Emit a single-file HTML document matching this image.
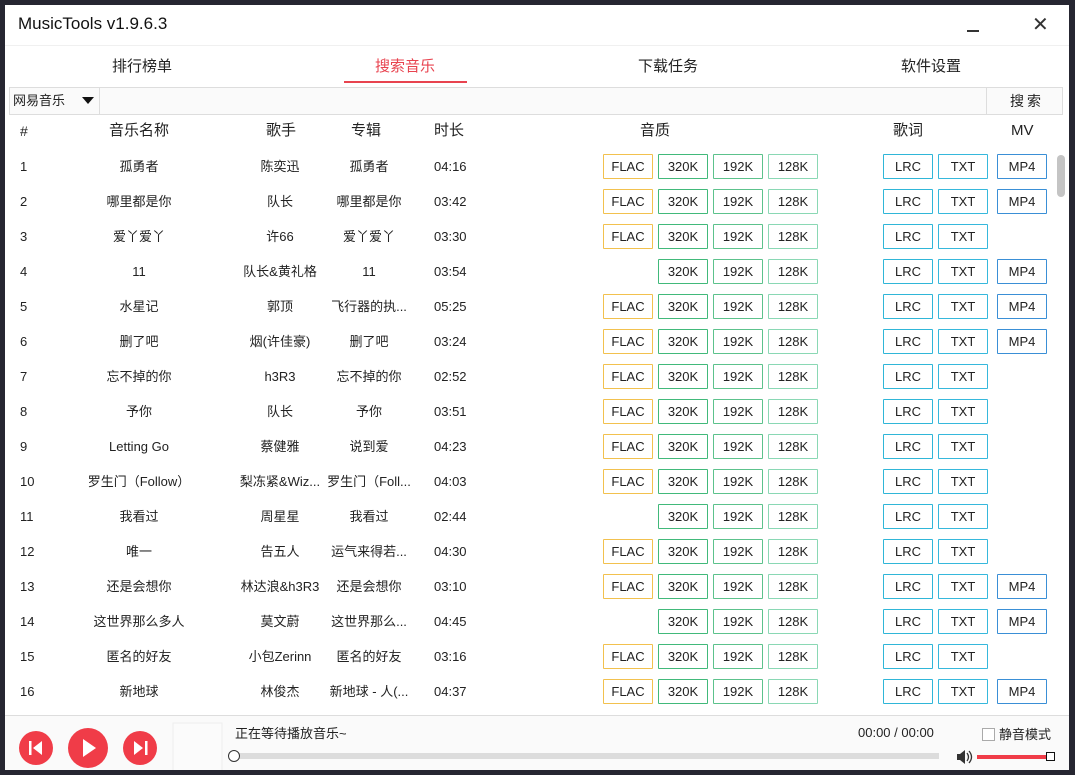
<!DOCTYPE html>
<html><head><meta charset="utf-8">
<style>
*{box-sizing:border-box;margin:0;padding:0}
body{width:1075px;height:775px;background:#262631;position:relative;overflow:hidden;font-family:"Liberation Sans","Noto Sans CJK SC",sans-serif;color:#222}
#win{position:absolute;left:5px;top:5px;width:1064px;height:765px;background:#fff;overflow:hidden}
.abs{position:absolute;line-height:20px}
#title{left:13px;top:9px;font-size:17px;color:#111}
.tab{top:52px;font-size:15px;width:160px;text-align:center;color:#222}
#sb{left:4px;top:82px;width:1054px;height:28px;border:1px solid #ddd;background:#fafafa}
#list{left:0;top:140px;width:1064px;height:570px;overflow:hidden}
.r{position:absolute;left:0;width:1050px;height:35px;font-size:13px;color:#222}
.r span{position:absolute;top:0;height:35px;line-height:35px;white-space:nowrap}
.c1{left:15px}
.c2{left:54px;width:160px;text-align:center}
.c3{left:230px;width:90px;text-align:center}
.c4{left:318px;width:92px;text-align:center}
.c5{left:429px}
.r i{position:absolute;top:5px;width:50px;height:25px;border:1px solid;font-style:normal;font-size:13px;text-align:center;line-height:23px;border-radius:1px;color:#222}
.f{left:598px;border-color:#f2c14e!important}
.k3{left:653px;border-color:#41b97a!important}
.k1{left:708px;border-color:#5cc28c!important}
.k2{left:763px;border-color:#8ad8b4!important}
.l{left:878px;border-color:#2fb6d8!important}
.t{left:933px;border-color:#36b8dc!important}
.m{left:992px;border-color:#3a8fd6!important}
.hd{position:absolute;top:116px;height:20px;line-height:20px;font-size:15px;color:#222}
</style></head><body>
<div id="win">
<div class="abs" id="title">MusicTools v1.9.6.3</div>
<div class="abs" style="left:962px;top:25px;width:12px;height:2px;background:#333"></div>
<div class="abs" style="left:1027px;top:10px;font-size:20px;color:#333">✕</div>
<div class="abs" style="left:0;top:40px;width:1064px;height:1px;background:#f0f0f0"></div>
<div class="abs tab" style="left:57px">排行榜单</div>
<div class="abs tab" style="left:320px;color:#e8434f">搜索音乐</div>
<div class="abs" style="left:339px;top:76px;width:123px;height:2px;background:#e8434f"></div>
<div class="abs tab" style="left:583px">下载任务</div>
<div class="abs tab" style="left:846px">软件设置</div>
<div class="abs" id="sb"></div>
<div class="abs" style="left:8px;top:86px;font-size:13px">网易音乐</div>
<div class="abs" style="left:77px;top:92px;width:0;height:0;border-left:6px solid transparent;border-right:6px solid transparent;border-top:7px solid #111"></div>
<div class="abs" style="left:94px;top:82px;width:1px;height:28px;background:#ddd"></div>
<div class="abs" style="left:981px;top:82px;width:1px;height:28px;background:#ddd"></div>
<div class="abs" style="left:1005px;top:86px;font-size:14px;letter-spacing:3px">搜索</div>
<div class="hd" style="left:15px;font-size:14px">#</div>
<div class="hd" style="left:104px">音乐名称</div>
<div class="hd" style="left:261px">歌手</div>
<div class="hd" style="left:346px">专辑</div>
<div class="hd" style="left:429px">时长</div>
<div class="hd" style="left:635px">音质</div>
<div class="hd" style="left:888px">歌词</div>
<div class="hd" style="left:1006px">MV</div>
<div class="abs" style="left:1052px;top:150px;width:8px;height:42px;border-radius:4px;background:#c4c4c4"></div>
<div class="abs" id="list">
<div class="r" style="top:4px"><span class="c1">1</span><span class="c2">孤勇者</span><span class="c3">陈奕迅</span><span class="c4">孤勇者</span><span class="c5">04:16</span><i class="f">FLAC</i><i class="k3">320K</i><i class="k1">192K</i><i class="k2">128K</i><i class="l">LRC</i><i class="t">TXT</i><i class="m">MP4</i></div>
<div class="r" style="top:39px"><span class="c1">2</span><span class="c2">哪里都是你</span><span class="c3">队长</span><span class="c4">哪里都是你</span><span class="c5">03:42</span><i class="f">FLAC</i><i class="k3">320K</i><i class="k1">192K</i><i class="k2">128K</i><i class="l">LRC</i><i class="t">TXT</i><i class="m">MP4</i></div>
<div class="r" style="top:74px"><span class="c1">3</span><span class="c2">爱丫爱丫</span><span class="c3">许66</span><span class="c4">爱丫爱丫</span><span class="c5">03:30</span><i class="f">FLAC</i><i class="k3">320K</i><i class="k1">192K</i><i class="k2">128K</i><i class="l">LRC</i><i class="t">TXT</i></div>
<div class="r" style="top:109px"><span class="c1">4</span><span class="c2">11</span><span class="c3">队长&amp;黄礼格</span><span class="c4">11</span><span class="c5">03:54</span><i class="k3">320K</i><i class="k1">192K</i><i class="k2">128K</i><i class="l">LRC</i><i class="t">TXT</i><i class="m">MP4</i></div>
<div class="r" style="top:144px"><span class="c1">5</span><span class="c2">水星记</span><span class="c3">郭顶</span><span class="c4">飞行器的执...</span><span class="c5">05:25</span><i class="f">FLAC</i><i class="k3">320K</i><i class="k1">192K</i><i class="k2">128K</i><i class="l">LRC</i><i class="t">TXT</i><i class="m">MP4</i></div>
<div class="r" style="top:179px"><span class="c1">6</span><span class="c2">删了吧</span><span class="c3">烟(许佳豪)</span><span class="c4">删了吧</span><span class="c5">03:24</span><i class="f">FLAC</i><i class="k3">320K</i><i class="k1">192K</i><i class="k2">128K</i><i class="l">LRC</i><i class="t">TXT</i><i class="m">MP4</i></div>
<div class="r" style="top:214px"><span class="c1">7</span><span class="c2">忘不掉的你</span><span class="c3">h3R3</span><span class="c4">忘不掉的你</span><span class="c5">02:52</span><i class="f">FLAC</i><i class="k3">320K</i><i class="k1">192K</i><i class="k2">128K</i><i class="l">LRC</i><i class="t">TXT</i></div>
<div class="r" style="top:249px"><span class="c1">8</span><span class="c2">予你</span><span class="c3">队长</span><span class="c4">予你</span><span class="c5">03:51</span><i class="f">FLAC</i><i class="k3">320K</i><i class="k1">192K</i><i class="k2">128K</i><i class="l">LRC</i><i class="t">TXT</i></div>
<div class="r" style="top:284px"><span class="c1">9</span><span class="c2">Letting Go</span><span class="c3">蔡健雅</span><span class="c4">说到爱</span><span class="c5">04:23</span><i class="f">FLAC</i><i class="k3">320K</i><i class="k1">192K</i><i class="k2">128K</i><i class="l">LRC</i><i class="t">TXT</i></div>
<div class="r" style="top:319px"><span class="c1">10</span><span class="c2">罗生门（Follow）</span><span class="c3">梨冻紧&amp;Wiz...</span><span class="c4">罗生门（Foll...</span><span class="c5">04:03</span><i class="f">FLAC</i><i class="k3">320K</i><i class="k1">192K</i><i class="k2">128K</i><i class="l">LRC</i><i class="t">TXT</i></div>
<div class="r" style="top:354px"><span class="c1">11</span><span class="c2">我看过</span><span class="c3">周星星</span><span class="c4">我看过</span><span class="c5">02:44</span><i class="k3">320K</i><i class="k1">192K</i><i class="k2">128K</i><i class="l">LRC</i><i class="t">TXT</i></div>
<div class="r" style="top:389px"><span class="c1">12</span><span class="c2">唯一</span><span class="c3">告五人</span><span class="c4">运气来得若...</span><span class="c5">04:30</span><i class="f">FLAC</i><i class="k3">320K</i><i class="k1">192K</i><i class="k2">128K</i><i class="l">LRC</i><i class="t">TXT</i></div>
<div class="r" style="top:424px"><span class="c1">13</span><span class="c2">还是会想你</span><span class="c3">林达浪&amp;h3R3</span><span class="c4">还是会想你</span><span class="c5">03:10</span><i class="f">FLAC</i><i class="k3">320K</i><i class="k1">192K</i><i class="k2">128K</i><i class="l">LRC</i><i class="t">TXT</i><i class="m">MP4</i></div>
<div class="r" style="top:459px"><span class="c1">14</span><span class="c2">这世界那么多人</span><span class="c3">莫文蔚</span><span class="c4">这世界那么...</span><span class="c5">04:45</span><i class="k3">320K</i><i class="k1">192K</i><i class="k2">128K</i><i class="l">LRC</i><i class="t">TXT</i><i class="m">MP4</i></div>
<div class="r" style="top:494px"><span class="c1">15</span><span class="c2">匿名的好友</span><span class="c3">小包Zerinn</span><span class="c4">匿名的好友</span><span class="c5">03:16</span><i class="f">FLAC</i><i class="k3">320K</i><i class="k1">192K</i><i class="k2">128K</i><i class="l">LRC</i><i class="t">TXT</i></div>
<div class="r" style="top:529px"><span class="c1">16</span><span class="c2">新地球</span><span class="c3">林俊杰</span><span class="c4">新地球 - 人(...</span><span class="c5">04:37</span><i class="f">FLAC</i><i class="k3">320K</i><i class="k1">192K</i><i class="k2">128K</i><i class="l">LRC</i><i class="t">TXT</i><i class="m">MP4</i></div>
</div>
<div class="abs" style="left:0;top:710px;width:1064px;height:55px;background:#fafafa;border-top:1px solid #ddd"></div>
<svg class="abs" style="left:0;top:710px" width="240" height="55">
<circle cx="31" cy="33" r="17" fill="#f03c48"/><rect x="24" y="26" width="2.5" height="14" fill="#fff"/><path d="M37 26 L28 33 L37 40Z" fill="#fff"/>
<circle cx="83" cy="33" r="20" fill="#f03c48"/><path d="M78 24 L91 33 L78 42Z" fill="#fff"/>
<circle cx="135" cy="33" r="17" fill="#f03c48"/><rect x="140" y="26" width="2.5" height="14" fill="#fff"/><path d="M129 26 L138 33 L129 40Z" fill="#fff"/>
<rect x="168" y="8" width="49" height="48" fill="#fbfbfb" stroke="#eee"/>
</svg>
<div class="abs" style="left:230px;top:719px;font-size:13px">正在等待播放音乐~</div>
<div class="abs" style="left:853px;top:718px;font-size:13px">00:00 / 00:00</div>
<div class="abs" style="left:229px;top:748px;width:705px;height:6px;background:#dcdcdc"></div>
<div class="abs" style="left:223px;top:745px;width:12px;height:12px;border-radius:50%;border:1.5px solid #333;background:#fff"></div>
<div class="abs" style="left:977px;top:723px;width:13px;height:13px;border:1px solid #aaa;background:#fff"></div>
<div class="abs" style="left:994px;top:720px;font-size:13px">静音模式</div>
<svg class="abs" style="left:950px;top:744px" width="18" height="16"><path d="M2 5h3l5-4v14l-5-4H2z" fill="#333"/><path d="M12 4q3 4 0 8M14 2q5 6 0 12" stroke="#333" fill="none" stroke-width="1.3"/></svg>
<div class="abs" style="left:972px;top:750px;width:72px;height:4px;background:#f03c48"></div>
<div class="abs" style="left:1041px;top:747px;width:9px;height:9px;border:1.5px solid #111;background:#fff"></div>
</div>
</body></html>
